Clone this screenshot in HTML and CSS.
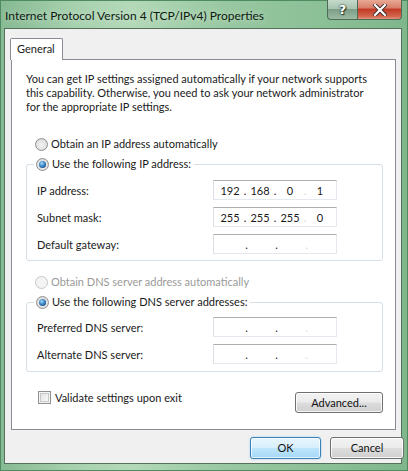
FILE: index.html
```html
<!DOCTYPE html>
<html>
<head>
<meta charset="utf-8">
<title>Internet Protocol Version 4 (TCP/IPv4) Properties</title>
<link rel="stylesheet" href="styles.css">
</head>
<body>
<div class="window">
  <div class="titlebar">
    <div class="title">Internet Protocol Version 4 (TCP/IPv4) Properties</div>
    <div class="caption-buttons">
      <div class="cap help"><span>?</span></div>
      <div class="cap close">
        <svg width="14" height="12" viewBox="0 0 14 12"><path d="M2 1 L12 11 M12 1 L2 11" stroke="#3a2a2a" stroke-width="4" stroke-linecap="square"/><path d="M2 1 L12 11 M12 1 L2 11" stroke="#fff" stroke-width="2.2" stroke-linecap="square"/></svg>
      </div>
    </div>
  </div>
  <div class="client">
    <div class="tabs">
      <div class="tab">General</div>
    </div>
    <div class="panel">
      <p class="desc">You can get IP settings assigned automatically if your network supports this capability. Otherwise, you need to ask your network administrator for the appropriate IP settings.</p>

      <div class="option first"><span class="radio"></span><span>Obtain an IP address automatically</span></div>
      <fieldset class="group">
        <legend class="option"><span class="radio checked"></span><span>Use the following IP address:</span></legend>
        <div class="row"><span class="label">IP address:</span>
          <div class="ipbox"><span class="seg">192</span><span class="dot">.</span><span class="seg">168</span><span class="dot">.</span><span class="seg">0</span><span class="dot faint">.</span><span class="seg">1</span></div></div>
        <div class="row"><span class="label">Subnet mask:</span>
          <div class="ipbox"><span class="seg">255</span><span class="dot">.</span><span class="seg">255</span><span class="dot">.</span><span class="seg">255</span><span class="dot faint">.</span><span class="seg">0</span></div></div>
        <div class="row"><span class="label">Default gateway:</span>
          <div class="ipbox empty"><span class="seg"></span><span class="dot">.</span><span class="seg"></span><span class="dot">.</span><span class="seg"></span><span class="dot faint">.</span><span class="seg"></span></div></div>
      </fieldset>

      <div class="option second disabled"><span class="radio"></span><span>Obtain DNS server address automatically</span></div>
      <fieldset class="group dns">
        <legend class="option"><span class="radio checked"></span><span>Use the following DNS server addresses:</span></legend>
        <div class="row"><span class="label">Preferred DNS server:</span>
          <div class="ipbox empty"><span class="seg"></span><span class="dot">.</span><span class="seg"></span><span class="dot">.</span><span class="seg"></span><span class="dot faint">.</span><span class="seg"></span></div></div>
        <div class="row"><span class="label">Alternate DNS server:</span>
          <div class="ipbox empty"><span class="seg"></span><span class="dot">.</span><span class="seg"></span><span class="dot">.</span><span class="seg"></span><span class="dot faint">.</span><span class="seg"></span></div></div>
      </fieldset>

      <div class="bottom-row">
        <div class="check-option"><span class="checkbox"></span><span>Validate settings upon exit</span></div>
        <button class="btn advanced">Advanced...</button>
      </div>
    </div>
    <div class="dialog-buttons">
      <button class="btn ok">OK</button>
      <button class="btn cancel">Cancel</button>
    </div>
  </div>
</div>
</body>
</html>
```
FILE: styles.css
```css
* { box-sizing: border-box; }
html, body { margin: 0; padding: 0; }
body {
  width: 408px;
  height: 471px;
  overflow: hidden;
  font-family: Lato, "Liberation Sans", sans-serif;
  font-size: 11px;
  color: #1a1a1a;
  background: #7db38a;
}

.window {
  width: 408px;
  height: 471px;
  display: flex;
  flex-direction: column;
  padding: 0 5px 6px 3px;
  background: linear-gradient(90deg, #86ba92 0%, #a7d1ae 18%, #b3d9b8 32%, #98c8a1 55%, #8bbf96 80%, #7fb68b 100%);
  border: 1px solid #4f8a60;
}

/* title bar */
.titlebar {
  height: 27px;
  display: flex;
  justify-content: space-between;
  align-items: flex-start;
  flex: none;
}
.title {
  font-size: 12px;
  color: #0d1a10;
  padding: 8px 0 0 1px;
  line-height: 14px;
  text-shadow: 0 0 6px rgba(255,255,255,0.6);
}
.caption-buttons {
  display: flex;
  margin-top: -1px;
}
.cap {
  height: 20px;
  display: flex;
  align-items: center;
  justify-content: center;
  border: 1px solid #4d6b55;
  border-top: none;
}
.help {
  width: 30px;
  border-radius: 0 0 0 4px;
  border-right: none;
  background: linear-gradient(180deg, #c5dacb 0%, #a9c4b0 45%, #7f9e88 50%, #9bbba3 100%);
}
.help span {
  font: bold 13px "DejaVu Sans", sans-serif;
  color: #fff;
  text-shadow: 0 0 1px #253a2c, 0 0 2px #253a2c, 1px 1px 1px #253a2c;
}
.close {
  width: 45px;
  border-radius: 0 0 4px 0;
  background: linear-gradient(180deg, #e9a995 0%, #d9806c 40%, #c23c25 50%, #d2644c 85%, #e2937a 100%);
}

/* client area */
.client {
  flex: 1;
  background: #f0f0f0;
  border: 1px solid #53705c;
  padding: 9px 6px 0 6px;
  display: flex;
  flex-direction: column;
}
.tabs {
  display: flex;
  height: 21px;
  align-items: flex-end;
}
.tab {
  width: 53px;
  margin-left: -1px;
  background: #fff;
  border: 1px solid #898c95;
  border-bottom: none;
  border-radius: 2px 2px 0 0;
  padding: 3px 0 0 6px;
  line-height: 14px;
  position: relative;
  z-index: 1;
  margin-bottom: -1px;
  height: 22px;
}
.panel {
  width: 385px;
  height: 371px;
  background: #fff;
  border: 1px solid #898c95;
  padding: 12px 11px 0 14px;
}
.desc {
  margin: 0;
  line-height: 14px;
  width: 350px;
}
.option {
  display: flex;
  align-items: center;
  height: 16px;
  line-height: 16px;
}
.option .radio { margin-right: 3px; }
.option.first { margin: 22px 0 0 9px; }
.option.second { margin: 13px 0 0 9px; }
.disabled { color: #9a9a9a; }

.radio {
  width: 13px;
  height: 13px;
  border-radius: 50%;
  border: 1px solid #8f9092;
  background: radial-gradient(circle at 50% 55%, #f4f4f4 0%, #e2e2e2 55%, #cfcfcf 100%);
  display: inline-flex;
  align-items: center;
  justify-content: center;
  flex: none;
}
.radio.checked::after {
  content: "";
  width: 7px;
  height: 7px;
  border-radius: 50%;
  background: radial-gradient(circle at 40% 35%, #a6dcff 0%, #3b86c4 45%, #184f85 80%, #133f6a 100%);
}
.disabled .radio {
  border-color: #c6c6c6;
  background: #f4f4f4;
}

.group {
  margin: 4px 0 0 0;
  width: 357px;
  border: 1px solid #d5dfe5;
  border-radius: 3px;
  padding: 8px 10px 6px 10px;
  min-width: 0;
}
.group legend {
  padding: 0 3px 0 2px;
  margin-left: -3px;
}
.group.dns { padding: 7px 10px 7px 10px; }

.row {
  display: flex;
  align-items: center;
  height: 20px;
}
.row + .row { margin-top: 7px; }
.label {
  width: 176px;
  flex: none;
}
.ipbox {
  width: 124px;
  height: 20px;
  border: 1px solid #e3e9ef;
  border-top-color: #abadb3;
  border-left-color: #dbdfe6;
  background: #fff;
  display: flex;
  align-items: center;
  padding-left: 5px;
  font-size: 11px;
}
.seg {
  width: 22px;
  text-align: center;
}
.dot {
  width: 8px;
  text-align: center;
}
.dot.faint { color: #d6d6d6; }
.empty .dot { padding-left: 3px; }

.bottom-row {
  display: flex;
  justify-content: space-between;
  align-items: flex-start;
  margin: 17px 0 0 12px;
  width: 345px;
}
.check-option {
  display: flex;
  align-items: center;
  height: 14px;
  margin-top: 1px;
}
.checkbox {
  width: 13px;
  height: 13px;
  border: 1px solid #8f8f8f;
  background: linear-gradient(135deg, #dcdcdc 0%, #f2f2f2 60%, #fafafa 100%);
  box-shadow: inset 0 0 0 1px #f4f4f4, inset 0 0 0 2px #c9c9c9;
  margin-right: 4px;
  flex: none;
}

.btn {
  font-family: Lato, "Liberation Sans", sans-serif;
  font-size: 11px;
  color: #111;
  height: 22px;
  border: 1px solid #707070;
  border-radius: 3px;
  background: linear-gradient(180deg, #f2f2f2 0%, #ebebeb 48%, #dddddd 52%, #cfcfcf 100%);
  box-shadow: inset 0 0 0 1px rgba(255,255,255,0.8);
  padding: 0;
  line-height: 18px;
}
.advanced {
  width: 88px;
  height: 21px;
  margin-top: 3px;
}
.dialog-buttons {
  display: flex;
  justify-content: flex-end;
  gap: 9px;
  margin-top: 7px;
  padding-right: 0;
  width: 393px;
}
.ok {
  width: 71px;
  border-color: #3c7fb1;
  background: linear-gradient(180deg, #e9f6fd 0%, #d7eefc 48%, #bde5fc 52%, #a5d8f6 100%);
  box-shadow: inset 0 0 0 1px rgba(255,255,255,0.7), 0 0 2px #8ed3f7;
}
.cancel {
  width: 74px;
}
```
